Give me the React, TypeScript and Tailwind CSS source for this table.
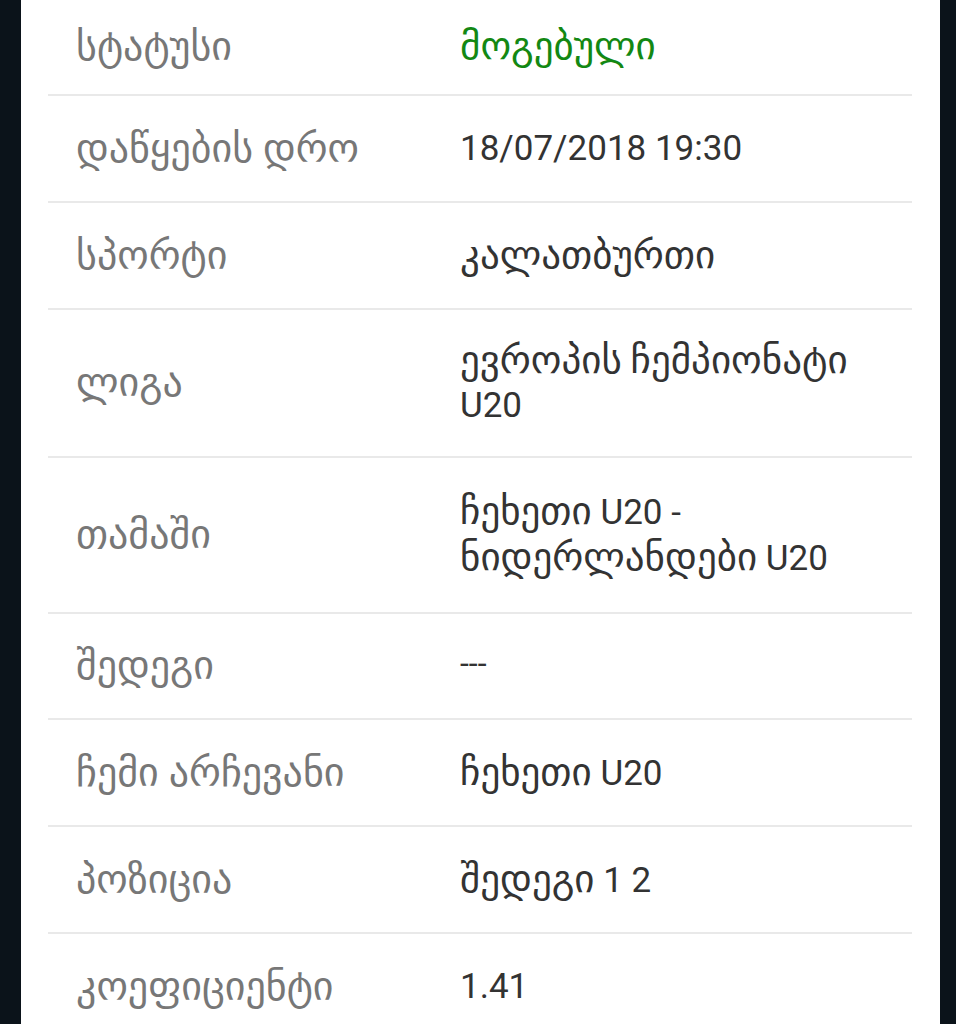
import React from 'react';

interface Row {
    label: string;
    value: string;
    green?: boolean;
    h: string;
}

const rows: Row[] = [
    { label: 'სტატუსი', value: 'მოგებული', green: true, h: 'h-[96px]' },
    { label: 'დაწყების დრო', value: '18/07/2018 19:30', h: 'h-[107px]' },
    { label: 'სპორტი', value: 'კალათბურთი', h: 'h-[107px]' },
    { label: 'ლიგა', value: 'ევროპის ჩემპიონატი U20', h: 'h-[148px]' },
    { label: 'თამაში', value: 'ჩეხეთი U20 - ნიდერლანდები U20', h: 'h-[156px]' },
    { label: 'შედეგი', value: '---', h: 'h-[106px]' },
    { label: 'ჩემი არჩევანი', value: 'ჩეხეთი U20', h: 'h-[107px]' },
    { label: 'პოზიცია', value: 'შედეგი 1 2', h: 'h-[107px]' },
    { label: 'კოეფიციენტი', value: '1.41', h: 'h-[107px]' },
];

// georgian glyphs render a bit larger than the latin ones in the screenshot
const Mixed: React.FC<{ text: string }> = ({ text }) => (
    <>
        {text.split(/([\u10A0-\u10FF]+)/).map((part, i) =>
            /[\u10A0-\u10FF]/.test(part) ? (
                <span key={i} className="text-[39px]">
                    {part}
                </span>
            ) : (
                <span key={i}>{part}</span>
            )
        )}
    </>
);

const App: React.FC = () => {
    return (
        <div
            className="min-h-[1024px] bg-[#0b131a] pl-[21px] pr-[16px]"
            style={{ fontFamily: 'Roboto, "DejaVu Sans", sans-serif' }}
        >
            <div className="min-h-[1024px] bg-white pl-[27px] pr-[28px]">
                {rows.map((row, i) => (
                    <div
                        key={i}
                        className={`flex items-center border-b-[2px] border-[#e9e9e9] ${row.h}`}
                    >
                        <div className="w-[412px] shrink-0 pl-[28px] text-[40px] text-[#777777]">
                            {row.label}
                        </div>
                        <div
                            className={`flex-1 pr-[10px] leading-[44px] ${
                                row.green ? 'text-[#138813]' : 'text-[#333333]'
                            } ${row.value === '---' ? 'text-[32px] -mt-[6px]' : 'text-[35px]'}`}
                        >
                            <Mixed text={row.value} />
                        </div>
                    </div>
                ))}
            </div>
        </div>
    );
};

export default App;
